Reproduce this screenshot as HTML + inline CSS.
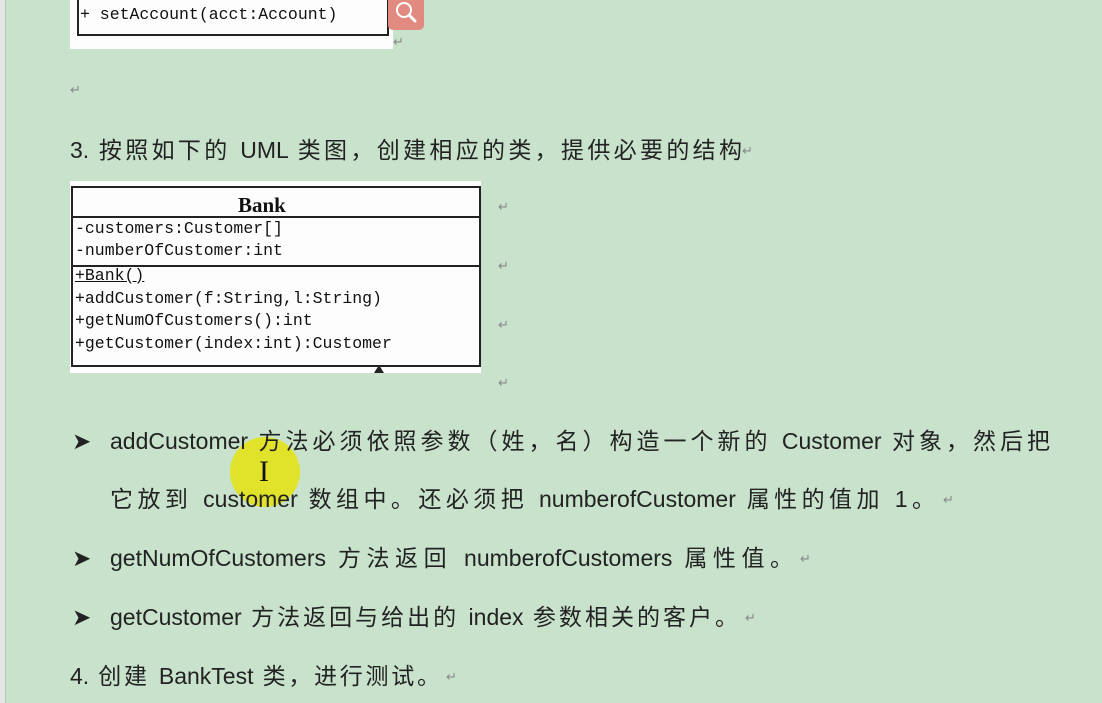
<!DOCTYPE html>
<html><head><meta charset="utf-8"><style>
*{margin:0;padding:0}
body{width:1102px;height:703px;overflow:hidden;background:#c8e2cc;position:relative;font-family:"Liberation Sans","Noto Sans CJK SC",sans-serif;color:#222}
.a{position:absolute;white-space:nowrap}
.t{font-size:23px;line-height:30px}
.j{white-space:normal;text-align:justify;text-align-last:justify}
.m{font-family:"Liberation Mono","Noto Sans CJK SC",monospace;font-size:16.5px;color:#111}
.r{color:#888;font-size:13px}
</style></head><body>
<div class="a" style="left:0;top:0;width:5px;height:703px;background:#e4e6e4"></div>
<div class="a" style="left:5px;top:0;width:1px;height:703px;background:#b8c8bc"></div>
<div class="a" style="left:70px;top:0;width:323px;height:49px;background:#fdfdfd"></div>
<div class="a" style="left:77px;top:-2px;width:308px;height:36px;border:2px solid #222;border-top:none"></div>
<div class="a m" style="left:80px;top:5px">+ setAccount(acct:Account)</div>
<div class="a" style="left:388px;top:0;width:36px;height:30px;background:#e08a80;border-radius:0 0 5px 5px"></div>
<svg class="a" style="left:392px;top:0" width="28" height="26"><circle cx="12" cy="10" r="7" fill="none" stroke="#fff" stroke-width="2"/><line x1="17" y1="15" x2="23" y2="21" stroke="#fff" stroke-width="3" stroke-linecap="round"/></svg>
<div class="a r" style="left:393px;top:34px">↵</div>
<div class="a r" style="left:70px;top:82px">↵</div>
<div class="a t j" style="left:70px;top:135px;width:672px">3. 按照如下的 UML 类图，创建相应的类，提供必要的结构</div>
<div class="a r" style="left:742px;top:143px">↵</div>
<div class="a" style="left:70px;top:181px;width:411px;height:192px;background:#fdfdfd"></div>
<div class="a" style="left:71px;top:186px;width:406px;height:177px;border:2px solid #222"></div>
<div class="a" style="left:71px;top:216px;width:410px;height:2px;background:#222"></div>
<div class="a" style="left:71px;top:265px;width:410px;height:2px;background:#222"></div>
<div class="a" style="left:238px;top:193px;font:bold 21px 'Liberation Serif',serif;color:#111">Bank</div>
<div class="a m" style="left:75px;top:218px;line-height:22px">-customers:Customer[]<br>-numberOfCustomer:int</div>
<div class="a m" style="left:75px;top:265px;line-height:22.5px"><u>+Bank()</u><br>+addCustomer(f:String,l:String)<br>+getNumOfCustomers():int<br>+getCustomer(index:int):Customer</div>
<div class="a" style="left:374px;top:365px;width:0;height:0;border-left:5px solid transparent;border-right:5px solid transparent;border-bottom:8px solid #222"></div>
<div class="a r" style="left:498px;top:199px">↵</div>
<div class="a r" style="left:498px;top:258px">↵</div>
<div class="a r" style="left:498px;top:317px">↵</div>
<div class="a r" style="left:498px;top:375px">↵</div>
<div class="a" style="left:230px;top:437px;width:70px;height:70px;border-radius:50%;background:#e3e31a;opacity:.9"></div>
<div class="a t" style="left:72px;top:426px">➤</div>
<div class="a t j" style="left:110px;top:426px;width:940px">addCustomer 方法必须依照参数（姓，名）构造一个新的 Customer 对象，然后把</div>
<div class="a" style="left:259px;top:455px;font:30px 'Liberation Serif',serif;color:#111">I</div>
<div class="a t j" style="left:110px;top:484px;width:825px">它放到 customer 数组中。还必须把 numberofCustomer 属性的值加 1。</div>
<div class="a r" style="left:943px;top:492px">↵</div>
<div class="a t" style="left:72px;top:543px">➤</div>
<div class="a t j" style="left:110px;top:543px;width:683px">getNumOfCustomers 方法返回 numberofCustomers 属性值。</div>
<div class="a r" style="left:800px;top:551px">↵</div>
<div class="a t" style="left:72px;top:602px">➤</div>
<div class="a t j" style="left:110px;top:602px;width:628px">getCustomer 方法返回与给出的 index 参数相关的客户。</div>
<div class="a r" style="left:745px;top:610px">↵</div>
<div class="a t j" style="left:70px;top:661px;width:370px">4. 创建 BankTest 类，进行测试。</div>
<div class="a r" style="left:446px;top:669px">↵</div>
</body></html>
